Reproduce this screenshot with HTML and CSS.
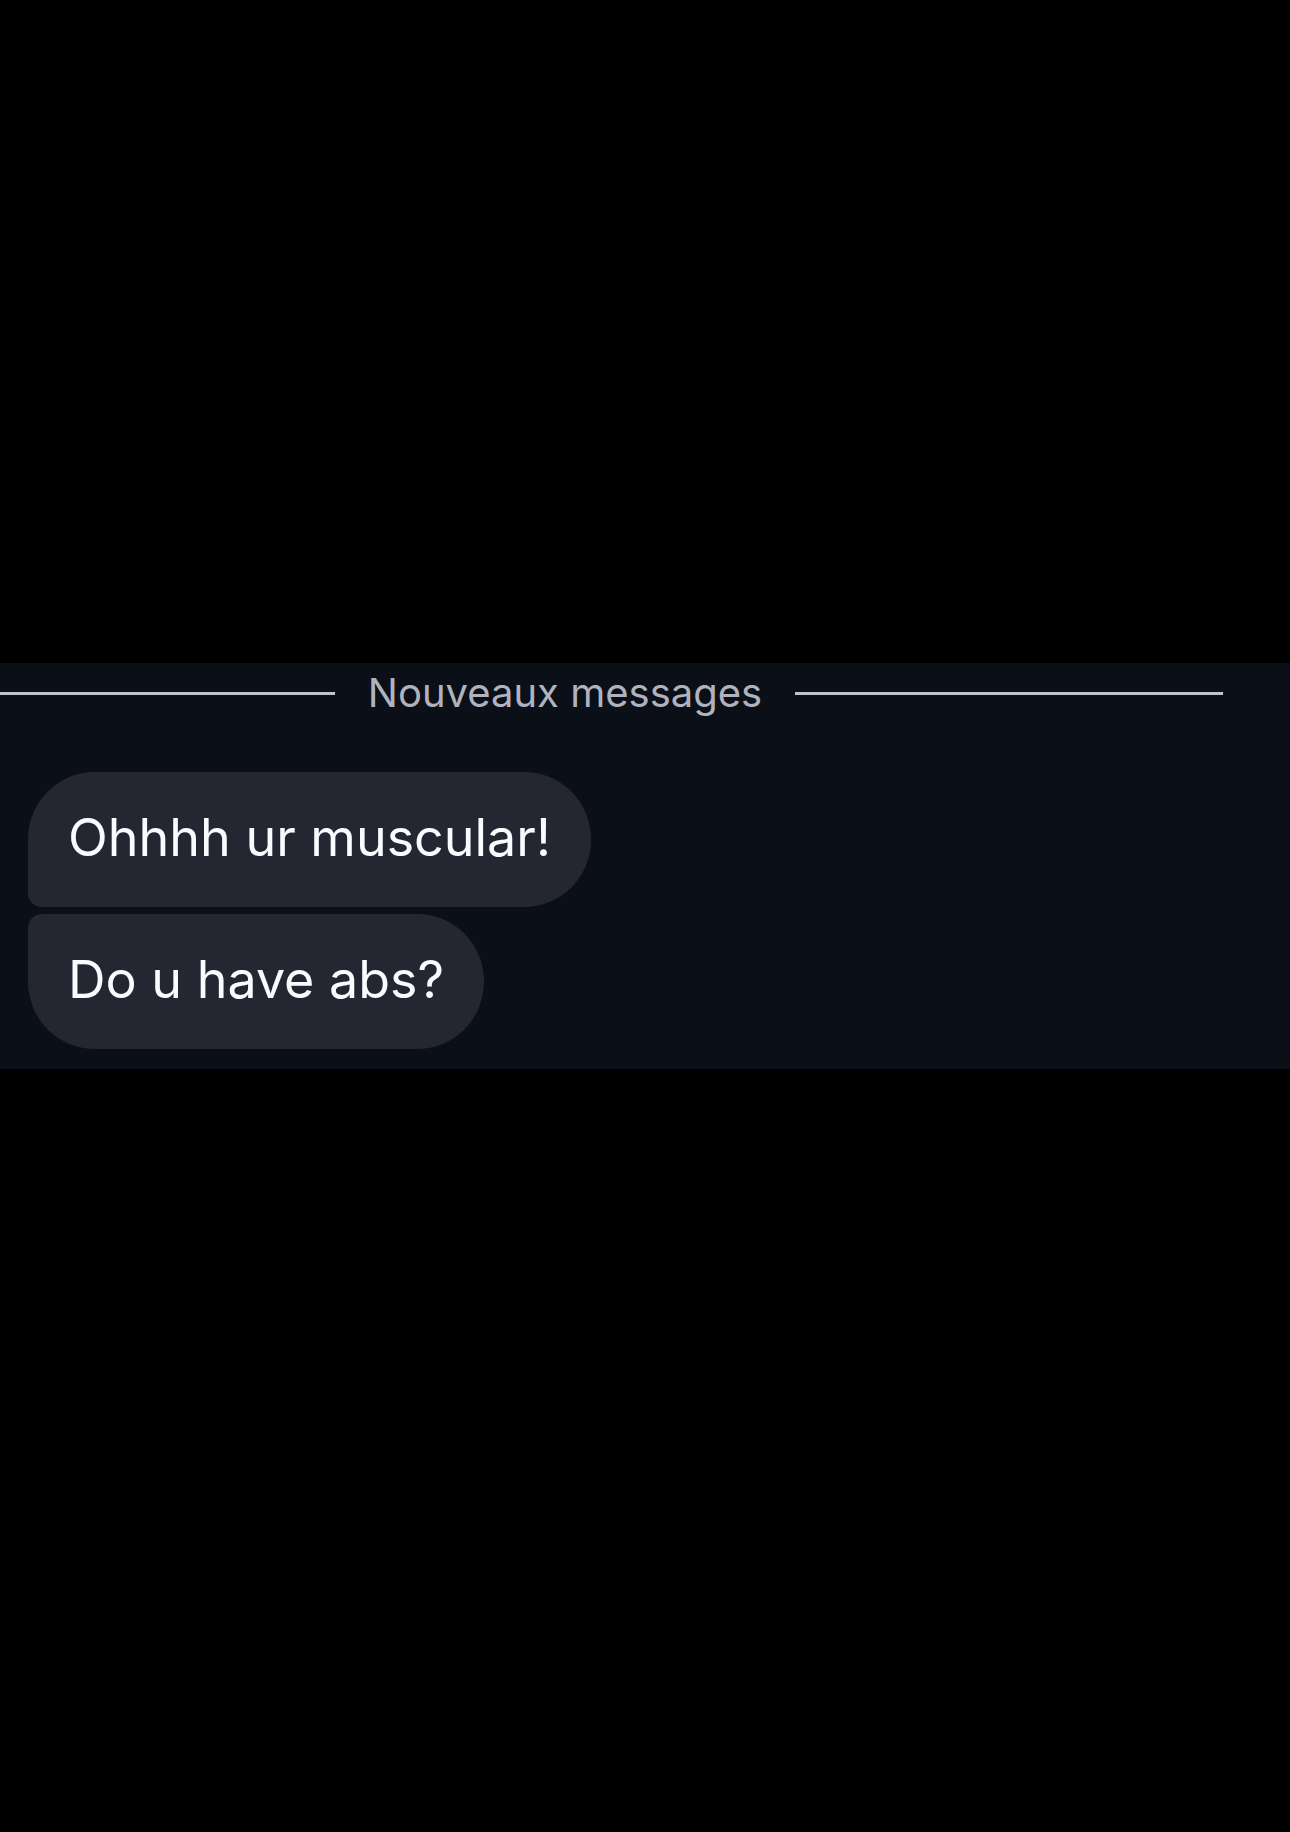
FILE: index.html
```html
<!DOCTYPE html>
<html lang="fr">
<head>
    <meta charset="UTF-8">
    <meta name="viewport" content="width=device-width, initial-scale=1.0">
    <title>Nouveaux messages</title>
    <link rel="stylesheet" href="styles.css">
</head>
<body>

    <main class="chat">
        <div class="divider">
            <span class="divider-label">Nouveaux messages</span>
        </div>

        <ul class="messages">
            <li class="bubble">Ohhhh ur muscular!</li>
            <li class="bubble">Do u have abs?</li>
        </ul>
    </main>

</body>
</html>
```
FILE: styles.css
```css
* {
    box-sizing: border-box;
}

body {
    font-family: Inter, "Liberation Sans", sans-serif;
    margin: 0;
    padding-bottom: 100px;
    background-color: #000;
    display: flex;
    flex-direction: column;
    justify-content: center;
    min-height: 100vh;
}

.chat {
    background-color: #0a0f18;
    padding: 6px 0 20px;
    overflow: hidden;
}

/* "new messages" separator, runs off the left edge */
.divider {
    display: flex;
    align-items: center;
    gap: 33px;
    margin-left: -93px;
    margin-right: 67px;
}

.divider::before,
.divider::after {
    content: "";
    flex: 1;
    height: 3px;
    background-color: #bfc2d2;
}

.divider-label {
    font-size: 40px;
    line-height: 48px;
    color: #b0b3be;
}

.messages {
    list-style: none;
    margin: 55px 0 0;
    padding: 0 28px;
    display: flex;
    flex-direction: column;
    align-items: flex-start;
    gap: 7px;
}

.bubble {
    background-color: #242731;
    color: #f9fbff;
    font-size: 52px;
    line-height: 63px;
    padding: 34px 40px 38px;
    border-radius: 67px;
}

.bubble:first-child {
    border-bottom-left-radius: 14px;
}

.bubble:last-child {
    border-top-left-radius: 14px;
}
```
